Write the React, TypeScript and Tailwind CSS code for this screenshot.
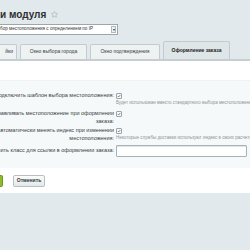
import { Star } from "lucide-react";

const font = { fontFamily: '"Liberation Sans", Arial, sans-serif' };

function Check() {
  return (
    <div className="w-[6px] h-[6px] border border-[#9aa3a7] bg-[#f7f9fa] rounded-[1px] flex items-center justify-center">
      <svg viewBox="0 0 10 10" className="w-[6px] h-[6px]">
        <path d="M2 5.2 L4.2 7.4 L8.4 2.4" stroke="#3c4a52" strokeWidth="1.6" fill="none" />
      </svg>
    </div>
  );
}

function Label({ lines }: { lines: string[] }) {
  return (
    <div className="w-[114px] shrink-0 overflow-hidden flex flex-col items-end text-[5.5px] leading-[7.5px] text-[#3a3d3f]">
      {lines.map((l) => (
        <span key={l} className="whitespace-nowrap">
          {l}
        </span>
      ))}
    </div>
  );
}

export default function App() {
  return (
    <div className="w-[250px] h-[250px] overflow-hidden bg-[#e2e9ec]" style={font}>
      {/* header */}
      <div className="pt-[7px] h-[22px] flex items-center gap-[5px]">
        <span className="text-[10px] font-bold text-[#2c2f31] leading-none">и модуля</span>
        <Star className="w-[7px] h-[7px] text-[#a2abb0]" strokeWidth={2} />
      </div>

      {/* select */}
      <div className="mt-[2px] w-[118px] h-[11px] bg-white border border-l-0 border-[#9ea6aa] flex items-center">
        <span className="flex-1 text-[4.6px] text-[#333] whitespace-nowrap overflow-hidden">
          бор местоположения с определением по IP
        </span>
        <div className="w-[5px] h-[7px] mr-[1px] border border-[#b0b7ba] bg-[#eef1f2] flex items-center justify-center">
          <div className="w-0 h-0 border-l-[1.5px] border-r-[1.5px] border-t-[2px] border-l-transparent border-r-transparent border-t-[#333]" />
        </div>
      </div>

      {/* tabs */}
      <div className="mt-[6px] h-[18px] flex items-end gap-[3px] text-[5px] text-[#3a3d3f]">
        <div className="h-[15px] w-[17px] bg-[#eef2f3] border border-l-0 border-b-0 border-[#c3cbce] rounded-tr-[2px] flex items-center justify-end pr-[3px]">
          йки
        </div>
        <div className="h-[15px] w-[67px] bg-[#eef2f3] border border-b-0 border-[#c3cbce] rounded-t-[2px] flex items-center justify-center">
          Окно выбора города
        </div>
        <div className="h-[15px] w-[70px] bg-[#eef2f3] border border-b-0 border-[#c3cbce] rounded-t-[2px] flex items-center justify-center">
          Окно подтверждения
        </div>
        <div className="h-[18px] w-[67px] bg-[#dfe6e8] border border-b-0 border-[#c3cbce] rounded-t-[2px] flex items-center justify-center font-bold text-[#222]">
          Оформление заказа
        </div>
      </div>

      {/* content */}
      <div className="bg-white border-t-2 border-[#c6ced1] h-[134px] flex flex-col">
        <div className="h-[19px]" />
        <div className="h-[88px] bg-[#f5f9fa] border-t border-[#edf2f3] flex flex-col">
          {/* row 1 */}
          <div className="mt-[11px] flex gap-[2px]">
            <Label lines={["Подключить шаблон выбора местоположения:"]} />
            <div className="flex flex-col pt-[1px]">
              <Check />
              <span className="mt-[1px] text-[4.5px] leading-[6px] text-[#8d9396] whitespace-nowrap">
                Будет использован вместо стандартного выбора местоположения
              </span>
            </div>
          </div>
          {/* row 2 */}
          <div className="mt-[4px] flex gap-[2px]">
            <Label lines={["Устанавливать местоположение при оформлении", "заказа:"]} />
            <div className="pt-[1px]">
              <Check />
            </div>
          </div>
          {/* row 3 */}
          <div className="mt-[2px] flex gap-[2px]">
            <Label lines={["Автоматически менять индекс при изменении", "местоположения:"]} />
            <div className="flex flex-col pt-[1px]">
              <Check />
              <span className="mt-[1px] text-[4.5px] leading-[6px] text-[#8d9396] whitespace-nowrap">
                Некоторые службы доставки используют индекс в своих расчетах
              </span>
            </div>
          </div>
          {/* row 4 */}
          <div className="mt-[3px] flex items-center gap-[2px]">
            <Label lines={["Установить класс для ссылки в оформлении заказа:"]} />
            <div className="w-[131px] h-[12px] bg-white border border-[#a9b1b5] rounded-[1px] shadow-[inset_0_1px_1px_rgba(0,0,0,0.12)]" />
          </div>
        </div>
        {/* buttons */}
        <div className="flex-1 flex items-center gap-[10px]">
          <div className="w-[3px] h-[12px] bg-[#8dbb2c] border border-l-0 border-[#6d9a1c] rounded-r-[2px]" />
          <div className="w-[32px] h-[12px] bg-gradient-to-b from-[#fbfcfc] to-[#e3e8ea] border border-[#b7bfc3] rounded-[2px] flex items-center justify-center text-[5px] font-bold text-[#333]">
            Отменить
          </div>
        </div>
      </div>
    </div>
  );
}
